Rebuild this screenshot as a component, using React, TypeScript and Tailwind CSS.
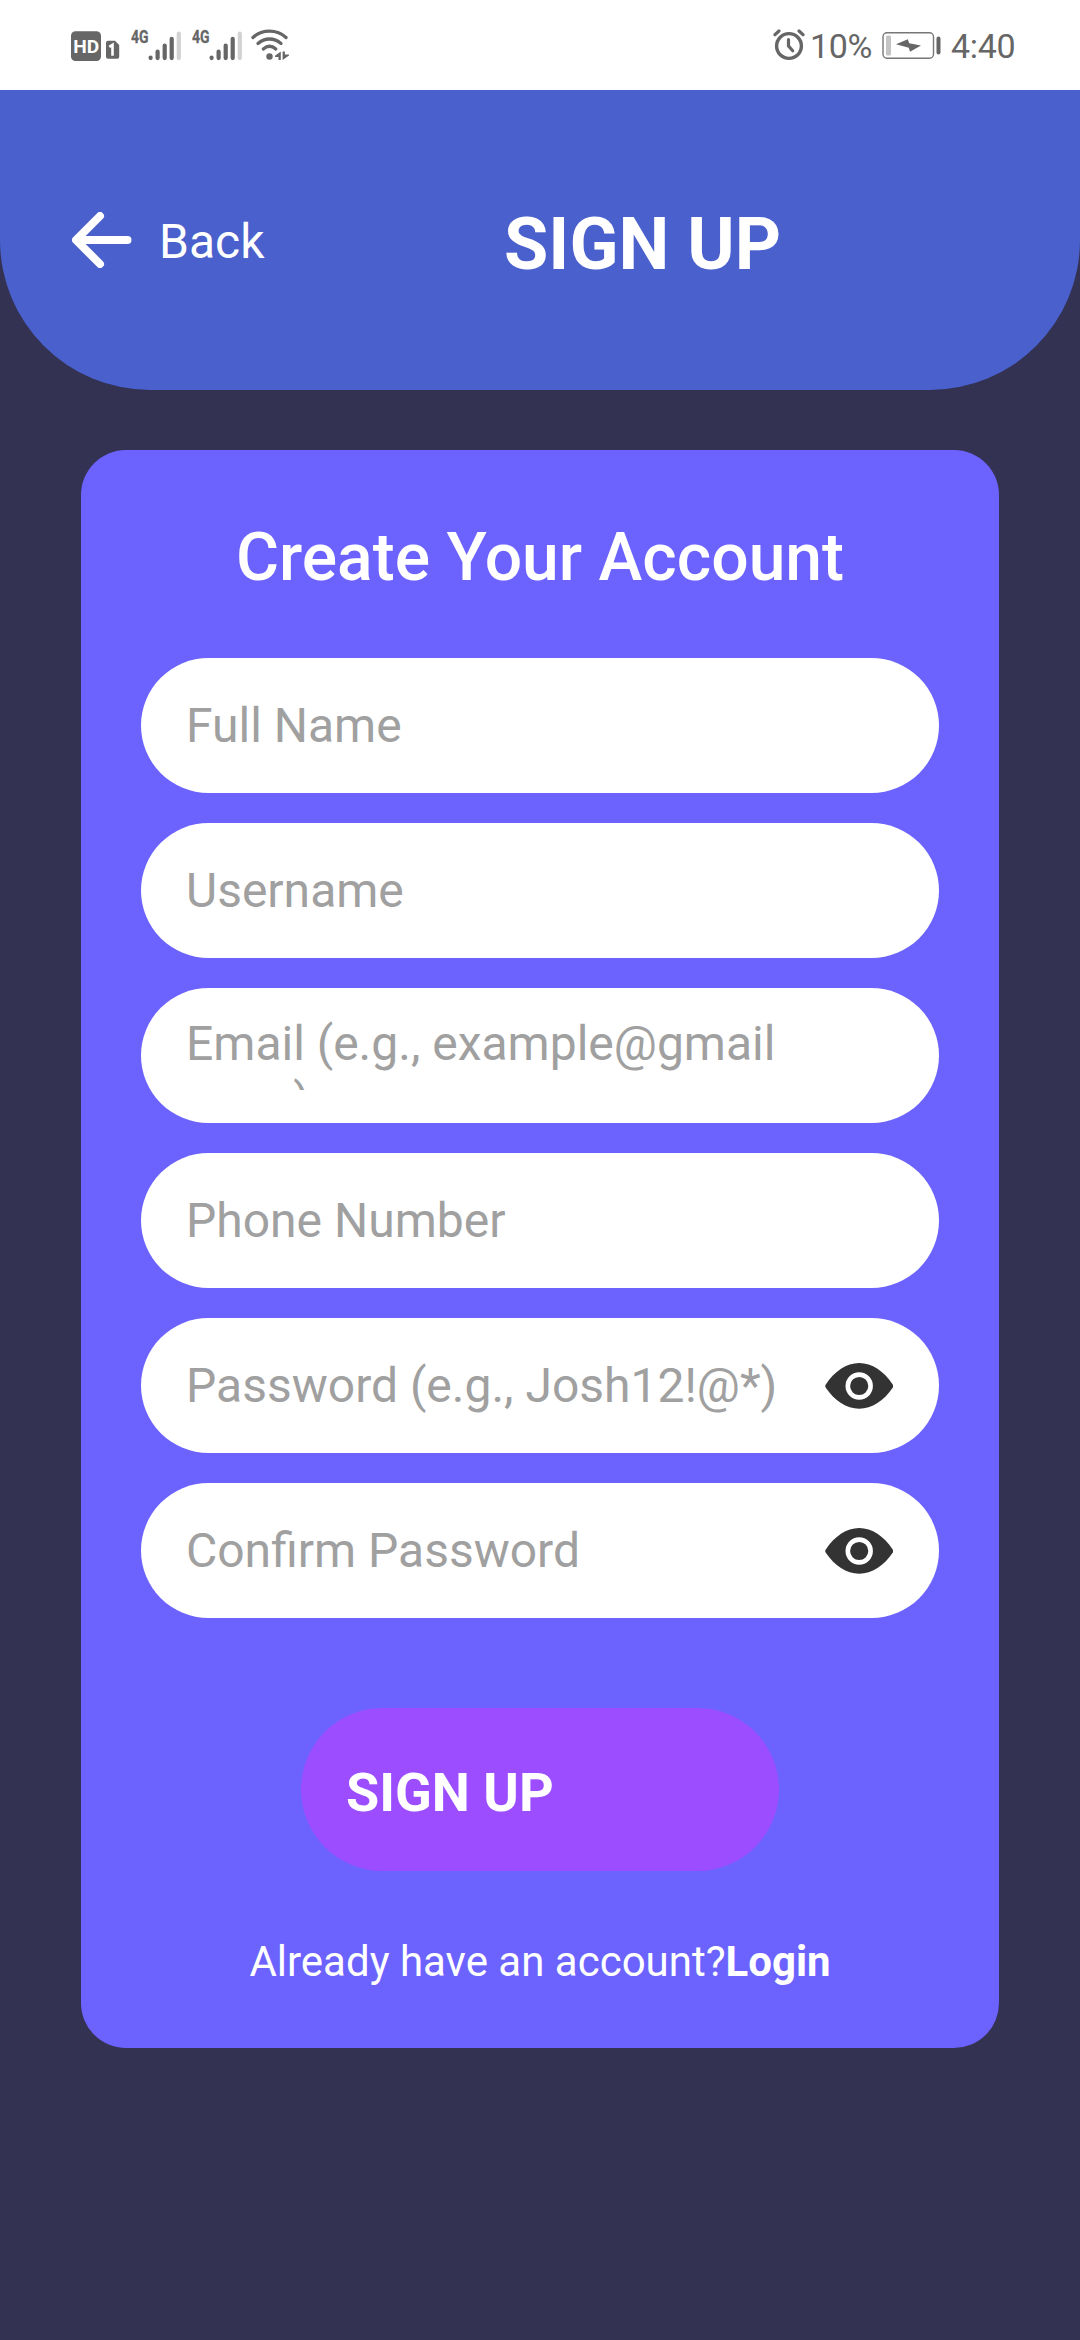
import React from "react";

const Signal = () => (
  <svg width="52" height="36" viewBox="0 0 52 36" className="shrink-0">
    <text x="0" y="17" fontFamily="Roboto" fontSize="18.5" fontWeight="700" fill="#666" stroke="#666" strokeWidth=".3" textLength="17.5" lengthAdjust="spacingAndGlyphs">4G</text>
    <g stroke="#666" strokeWidth="4.2" strokeLinecap="round">
      <path d="M19.600 31.500v.6M26.600 25.500v6.600M33.700 19.500v12.600M40.700 12.800v19.300" />
      <path d="M47.800 7.600v24.500" stroke="#d2d2d2" />
    </g>
  </svg>
);

const StatusBar = () => (
  <div className="flex h-[90px] items-start bg-white text-[#666]">
    <svg width="52" height="32" viewBox="0 0 52 32" className="ml-[70px] mt-[31px] shrink-0">
      <rect x="1" y="0.300" width="30" height="29.700" rx="4.500" fill="#666" />
      <text x="3.200" y="21.800" fontFamily="Roboto" fontSize="19" fontWeight="700" fill="#fff" textLength="26" lengthAdjust="spacingAndGlyphs">HD</text>
      <path d="M38 9.800h7l4.200 4.200v11.800a2 2 0 0 1-2 2H38a2 2 0 0 1-2-2v-14a2 2 0 0 1 2-2z" fill="#666" />
      <path d="M39.300 15.800l3.200-2v11" fill="none" stroke="#fff" strokeWidth="2.600" />
    </svg>
    <div className="ml-[9px] mt-[26px] flex gap-[9px]">
      <Signal />
      <Signal />
    </div>
    <svg width="40" height="36" viewBox="0 0 40 36" className="ml-[6px] mt-[26px] shrink-0">
      <g fill="none" stroke="#666" strokeWidth="3.300" strokeLinecap="round">
        <path d="M3 11.500C12 3 27 3 36 11.500" />
        <path d="M8 17.500c7-6 16-6 23 0" />
        <path d="M13.300 23c4-3.600 8.500-3.600 12.500 0" />
      </g>
      <circle cx="19.500" cy="30.500" r="3.200" fill="#666" />
      <path d="M30.800 25.500v8.500h-2.300v-2.900H25v-1.300zM32.600 34v-8.500h2.300v2.900h4.100v1z" fill="#666" />
    </svg>
    <div className="grow" />
    <svg width="32" height="34" viewBox="0 0 32 34" className="mt-[28px] shrink-0" fill="none" stroke="#666" strokeLinecap="round">
      <circle cx="16" cy="18" r="12.400" strokeWidth="3.400" />
      <path d="M15.500 11.500v6.500l4.200 4.700" strokeWidth="3.200" strokeLinejoin="round" />
      <path d="M2 6.700l4-3.700M26 3l4 3.700" strokeWidth="3.200" />
    </svg>
    <span className="ml-[5px] mt-[26px] w-[64px] text-[34px] leading-[40px] tracking-[-0.3px] whitespace-nowrap">10%</span>
    <svg width="60" height="28" viewBox="0 0 60 28" className="ml-[8px] mt-[32px] shrink-0">
      <rect x="1" y="0.800" width="50.500" height="25.500" rx="4" fill="#fff" stroke="#777" strokeWidth="1.400" />
      <rect x="4" y="3.500" width="5" height="20" rx="1.500" fill="#c4c4c4" />
      <path d="M14 12.200L25.800 7.200l1.400 4 11.800 2.200L28 19.700l-1.200-3.900z" fill="#666" />
      <path d="M56.500 6.500v14" stroke="#666" strokeWidth="4" strokeLinecap="round" />
    </svg>
    <span className="ml-[9px] mr-[65px] mt-[26px] w-[64px] text-[34px] leading-[40px] tracking-[-0.3px] whitespace-nowrap">4:40</span>
  </div>
);

const Eye = () => (
  <svg width="68" height="46" viewBox="0 0 68 46" className="mr-[46px] shrink-0" fill="#333">
    <path d="M.8 21.400C9.500 8.500 21.500 0 34.200 0s25 8.500 33.500 21.400c.8 1.200.8 2.200 0 3.400C59 37.500 47 45.700 34.200 45.700S9.500 37.500.8 24.800c-.8-1.200-.8-2.200 0-3.400z" />
    <circle cx="34.200" cy="23" r="11.400" stroke="#fff" strokeWidth="4.600" />
  </svg>
);

const fields = [
  { label: "Full Name" },
  { label: "Username" },
  { label: "Email (e.g., example@gmail .com)" },
  { label: "Phone Number" },
  { label: "Password (e.g., Josh12!@*)", secret: true },
  { label: "Confirm Password", secret: true },
];

const Field = ({ label, secret }: { label: string; secret?: boolean }) => {
  const wraps = label.startsWith("Email");
  return (
    <div className="flex h-[135px] items-center justify-between rounded-full bg-white pl-[45px]">
      <div className={`w-[600px] overflow-hidden text-[48px] leading-[57px] text-[#a0a0a0] ${wraps ? "mb-[6px] h-[75px]" : "h-[65px] whitespace-nowrap pt-[4px]"}`}>
        {label}
      </div>
      {secret && <Eye />}
    </div>
  );
};

export default function App() {
  return (
    <div className="flex h-[2340px] w-[1080px] flex-col overflow-hidden bg-[#333252] font-['Roboto',sans-serif]">
      <StatusBar />
      <header className="flex h-[300px] items-center rounded-b-[150px] bg-[#4a60cd] pl-[72px] text-white">
        <svg width="60" height="56" viewBox="0 0 60 56" fill="none" stroke="#fff" strokeWidth="8" strokeLinecap="round" strokeLinejoin="round">
          <path d="M55.500 28H5M28 4L4 28l24 24" />
        </svg>
        <span className="ml-[27px] w-[345px] pt-[3px] text-[48px] leading-[56px]">Back</span>
        <h1 className="pt-[9px] text-[72px] font-bold leading-[84px]">SIGN UP</h1>
      </header>
      <main className="mx-[81px] mt-[60px] flex h-[1598px] flex-col rounded-[45px] bg-[#6c63ff] px-[60px] pt-[69px] text-white">
        <h2 className="text-center text-[66px] font-medium leading-[78px]">Create Your Account</h2>
        <div className="mt-[61px] flex flex-col gap-[30px]">
          {fields.map((f) => (
            <Field key={f.label} {...f} />
          ))}
        </div>
        <button className="mt-[90px] h-[163px] w-[478px] self-center rounded-full bg-[#9b4dff] pl-[45px] pt-[5px] text-left text-[54px] font-bold">
          SIGN UP
        </button>
        <p className="mt-[66px] text-center text-[42px] leading-[50px]">
          Already have an account?<b className="font-bold">Login</b>
        </p>
      </main>
    </div>
  );
}
